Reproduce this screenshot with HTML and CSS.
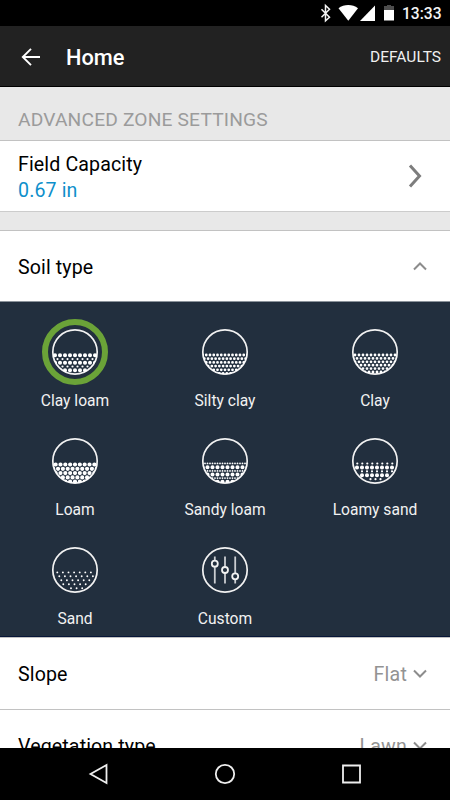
FILE: index.html
```html
<!DOCTYPE html>
<html lang="en">
<head>
    <meta charset="UTF-8">
    <meta name="viewport" content="width=device-width, initial-scale=1.0">
    <title>Advanced Zone Settings</title>
    <link rel="stylesheet" href="styles.css">
</head>
<body>
    <div class="status-bar">
        <svg width="78" height="26" viewBox="0 0 78 26">
            <path class="bt" d="M1.500 9.300l8 8-4 3.600V5.500l4 3.700-8 8"/>
            <path class="solid" d="M18.500 8.200C24 3.900 32.500 3.900 38 8.200L28.300 20.700z"/>
            <path class="solid" d="M55 5.500V21H40z"/>
            <path class="dim" d="M64 6h3V5h4v1h3v4H64z"/>
            <path class="solid" d="M64 10h10v10.500H64z"/>
        </svg>
        <span class="clock">13:33</span>
    </div>

    <header class="app-bar">
        <svg class="back" width="20" height="20" viewBox="0 0 20 20">
            <path d="M19 10H2M10 1.800L1.800 10l8.200 8.200"/>
        </svg>
        <h1>Home</h1>
        <span class="defaults">DEFAULTS</span>
    </header>

    <main>
        <h2>ADVANCED ZONE SETTINGS</h2>
        <div class="row capacity">
            <div>
                <div class="name">Field Capacity</div>
                <div class="value">0.67 in</div>
            </div>
            <svg class="next" width="16" height="24" viewBox="0 0 16 24">
                <path d="M3 1.500l9.500 10.500L3 22.500"/>
            </svg>
        </div>
        <div class="gap"></div>
        <div class="row">
            <div class="name">Soil type</div>
            <svg class="chevron" width="14" height="9" viewBox="0 0 14 9">
                <path d="M1 7.500l6-6 6 6"/>
            </svg>
        </div>

        <div class="soils">
            <div class="soil">
                <svg class="icon selected" viewBox="0 0 48 48">
                    <clipPath id="disc"><circle cx="24" cy="24" r="22.500"/></clipPath>
                    <circle class="ring" cx="24" cy="24" r="22.200"/>
                    <g clip-path="url(#disc)">
                        <path class="dots big" d="M-1 27.300h50M-1 34.800h50M-1 42.300h50"/>
                        <path class="dots small" d="M-3.500 31.100h54M-3.500 38.500h54"/>
                    </g>
                </svg>
                <span>Clay loam</span>
            </div>
            <div class="soil">
                <svg class="icon" viewBox="0 0 48 48">
                    <circle class="ring" cx="24" cy="24" r="22.200"/>
                    <g clip-path="url(#disc)">
                        <path class="dots silt" d="M1.500 27h46M-.4 30.700h50M1.500 34.400h46M-.4 38.100h50M1.500 41.800h46M-.4 45.500h50"/>
                    </g>
                </svg>
                <span>Silty clay</span>
            </div>
            <div class="soil">
                <svg class="icon" viewBox="0 0 48 48">
                    <circle class="ring" cx="24" cy="24" r="22.200"/>
                    <g clip-path="url(#disc)">
                        <path class="dots clay" d="M0 27h50M2 30.400h46M0 33.800h50M2 37.200h46M0 40.600h50M2 44h46"/>
                    </g>
                </svg>
                <span>Clay</span>
            </div>
            <div class="soil">
                <svg class="icon" viewBox="0 0 48 48">
                    <circle class="ring" cx="24" cy="24" r="22.200"/>
                    <g clip-path="url(#disc)">
                        <path class="dots loam" d="M-.2 27.500h50M2.200 31.800h48M-.2 36.100h50M2.200 40.400h48M-.2 44.700h50"/>
                    </g>
                </svg>
                <span>Loam</span>
            </div>
            <div class="soil">
                <svg class="icon" viewBox="0 0 48 48">
                    <circle class="ring" cx="24" cy="24" r="22.200"/>
                    <g clip-path="url(#disc)">
                        <path class="dots big" d="M1.500 30.300h50M1.500 37.500h50M1.500 44.700h50"/>
                        <path class="dots fine" d="M1.500 26.400h50M1.500 33.900h50M1.500 41.100h50"/>
                    </g>
                </svg>
                <span>Sandy loam</span>
            </div>
            <div class="soil">
                <svg class="icon" viewBox="0 0 48 48">
                    <circle class="ring" cx="24" cy="24" r="22.200"/>
                    <path class="dots big" d="M6 30.500h38M11 38.200h30"/>
                    <path class="dots small" d="M6.300 26.500h37M11 34.300h31M19.500 42.200h12"/>
                </svg>
                <span>Loamy sand</span>
            </div>
            <div class="soil">
                <svg class="icon" viewBox="0 0 48 48">
                    <circle class="ring" cx="24" cy="24" r="22.200"/>
                    <path class="dots sand" d="M6.300 26.400h35M8.300 30.300h35M10.300 34.300h29M12.300 38.200h27M20 42.200h13"/>
                </svg>
                <span>Sand</span>
            </div>
            <div class="soil">
                <svg class="icon" viewBox="0 0 48 48">
                    <circle class="ring" cx="24" cy="24" r="22.200"/>
                    <path class="track" d="M13.800 10.500v4M13.800 20.500v17M24 10.500v10.300M24 27v10.500M34.200 10.500v16.500M34.200 33v4.500"/>
                    <circle class="knob" cx="13.800" cy="17.700" r="3"/>
                    <circle class="knob" cx="24" cy="24" r="3"/>
                    <circle class="knob" cx="34.200" cy="30.300" r="3"/>
                </svg>
                <span>Custom</span>
            </div>
        </div>

        <div class="row slope">
            <div class="name">Slope</div>
            <div class="choice"><span>Flat</span>
                <svg class="chevron" width="14" height="9" viewBox="0 0 14 9">
                    <path d="M1 1.500l6 6 6-6"/>
                </svg>
            </div>
        </div>
        <div class="row">
            <div class="name">Vegetation type</div>
            <div class="choice"><span>Lawn</span>
                <svg class="chevron" width="14" height="9" viewBox="0 0 14 9">
                    <path d="M1 1.500l6 6 6-6"/>
                </svg>
            </div>
        </div>
    </main>

    <nav class="nav-bar">
        <svg width="22" height="22" viewBox="0 0 22 22"><path d="M18.500 2v18L2.500 11z"/></svg>
        <svg width="22" height="22" viewBox="0 0 22 22"><circle cx="11" cy="11" r="9.200"/></svg>
        <svg width="22" height="22" viewBox="0 0 22 22"><path d="M3 2.500h17v17H3z"/></svg>
    </nav>
</body>
</html>
```
FILE: styles.css
```css
* {
    box-sizing: border-box;
}

body {
    display: flex;
    flex-direction: column;
    height: 800px;
    margin: 0;
    overflow: hidden;
    font-family: Roboto, sans-serif;
    color: #000;
    background-color: #fff;
}

svg {
    display: block;
    flex: none;
    fill: none;
}

h1, h2 {
    margin: 0;
}

.status-bar {
    display: flex;
    flex: none;
    align-items: center;
    justify-content: flex-end;
    height: 26px;
    padding-right: 9px;
    color: #f4f4f4;
    background-color: #000;
}

.bt {
    stroke: #f4f4f4;
    stroke-width: 1.5;
}

.solid {
    fill: #fff;
}

.dim {
    fill: #4d4d4d;
}

.clock {
    width: 39px;
    margin-left: 4px;
    padding-top: 2px;
    font-size: 15.6px;
    font-weight: 500;
    line-height: 26px;
    white-space: nowrap;
}

.app-bar {
    display: flex;
    flex: none;
    align-items: center;
    height: 61px;
    padding: 2px 9px 0 21px;
    color: #fff;
    background-color: #222;
    border-bottom: 1px solid #000;
}

.back {
    stroke: #fff;
    stroke-width: 1.9;
}

h1 {
    margin-left: 25px;
    font-size: 21.8px;
    font-weight: 500;
}

.defaults {
    margin-left: auto;
    color: #f0f0f0;
    font-size: 15.5px;
}

main {
    flex: 1;
    min-height: 0;
    overflow: hidden;
}

h2 {
    height: 53px;
    padding: 12px 18px 0;
    color: #9b9b9b;
    background-color: #e8e8e8;
    font-size: 19.2px;
    font-weight: 400;
    letter-spacing: 0.17px;
    line-height: 41px;
    white-space: nowrap;
}

.row {
    display: flex;
    align-items: center;
    justify-content: space-between;
    height: 71px;
    padding: 0 23px 0 18px;
    background-color: #fff;
    border-top: 1px solid #c2c2c2;
}

.name {
    padding-top: 3px;
    font-size: 19.6px;
    letter-spacing: 0.12px;
    line-height: 26px;
}

.value {
    color: #0e8fcb;
    font-size: 19.6px;
    letter-spacing: 0.12px;
    line-height: 26px;
}

.capacity {
    padding-right: 27px;
}

.next {
    stroke: #7d7d7d;
    stroke-width: 3;
}

.chevron {
    stroke: #8c8c8c;
    stroke-width: 2;
}

.gap {
    height: 19px;
    background-color: #e8e8e8;
    border-top: 1px solid #ccc;
}

.soils {
    display: grid;
    grid-template-columns: repeat(3, 150px);
    grid-auto-rows: 109.2px;
    height: 336px;
    padding-top: 25.6px;
    color: #f2f2f2;
    background-color: #222f3e;
    border-top: 1px solid #8b939b;
    border-bottom: 1px solid #071638;
}

.soil {
    display: flex;
    flex-direction: column;
    align-items: center;
    font-size: 15.6px;
    line-height: 24px;
}

.icon {
    width: 48px;
    height: 48px;
    margin-bottom: 13.4px;
}

.selected {
    border-radius: 50%;
    outline: 6px solid #6ba338;
    outline-offset: 3px;
}

.ring {
    stroke: #f2f2f2;
    stroke-width: 1.7;
}

/* each row of grains is a line of zero-length round dashes */
.dots {
    stroke: #fff;
    stroke-linecap: round;
}

.big {
    stroke-width: 4.1;
    stroke-dasharray: 0 5;
}

.small {
    stroke-width: 2.2;
    stroke-dasharray: 0 5;
}

.fine {
    stroke-width: 1.8;
    stroke-dasharray: 0 2.5;
}

.silt {
    stroke-width: 2.8;
    stroke-dasharray: 0 3.75;
}

.clay {
    stroke-width: 2.8;
    stroke-dasharray: 0 4;
}

.loam {
    stroke-width: 4.2;
    stroke-dasharray: 0 4.84;
}

.sand {
    stroke-width: 1.9;
    stroke-dasharray: 0 5.6;
}

.track {
    stroke: #c9ccd0;
    stroke-width: 1.8;
}

.knob {
    stroke: #f2f2f2;
    stroke-width: 1.8;
}

.slope {
    height: 72px;
}

.choice {
    display: flex;
    align-items: center;
    gap: 6px;
    color: #939393;
    font-size: 19.6px;
    letter-spacing: 0.2px;
}

.choice span {
    padding-top: 2px;
}

.nav-bar {
    display: flex;
    flex: none;
    justify-content: space-between;
    height: 52px;
    padding: 15px 88px 0;
    background-color: #000;
}

.nav-bar svg {
    stroke: #eee;
    stroke-width: 1.8;
}
```
